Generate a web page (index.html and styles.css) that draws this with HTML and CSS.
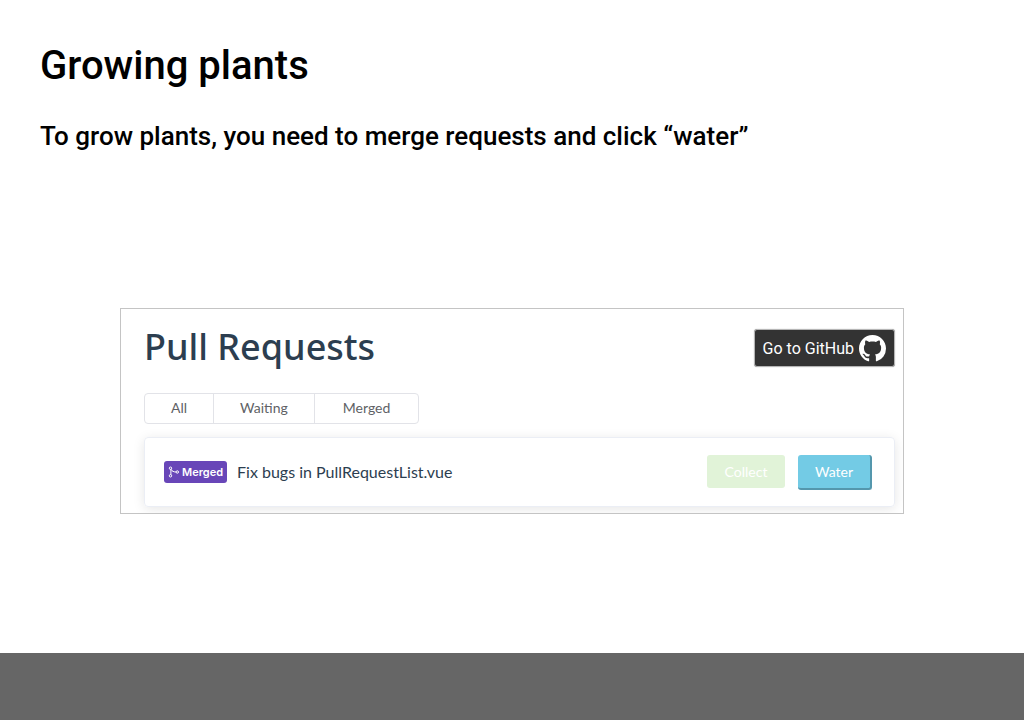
FILE: index.html
```html
<!DOCTYPE html>
<html lang="en">
<head>
<meta charset="utf-8">
<meta name="viewport" content="width=device-width, initial-scale=1">
<title>Growing plants</title>
<link rel="stylesheet" href="styles.css">
</head>
<body>
<main class="slide">
  <h1 class="slide-title">Growing plants</h1>
  <p class="slide-text">To grow plants, you need to merge requests and click “water”</p>
  <section class="panel">
    <header class="panel-header">
      <h2 class="panel-title">Pull Requests</h2>
      <button class="github" type="button">
        <span>Go to GitHub</span>
        <svg class="github-mark" viewBox="0 0 16 16" aria-hidden="true"><path fill="currentColor" d="M8 0C3.58 0 0 3.58 0 8c0 3.54 2.29 6.53 5.47 7.59.4.07.55-.17.55-.38 0-.19-.01-.82-.01-1.49-2.01.37-2.53-.49-2.69-.94-.09-.23-.48-.94-.82-1.13-.28-.15-.68-.52-.01-.53.63-.01 1.08.58 1.23.82.72 1.21 1.87.87 2.33.66.07-.52.28-.87.51-1.07-1.78-.2-3.64-.89-3.64-3.95 0-.87.31-1.59.82-2.15-.08-.2-.36-1.02.08-2.12 0 0 .67-.21 2.2.82.64-.18 1.32-.27 2-.27s1.36.09 2 .27c1.53-1.04 2.2-.82 2.2-.82.44 1.1.16 1.92.08 2.12.51.56.82 1.27.82 2.15 0 3.07-1.87 3.75-3.65 3.95.29.25.54.73.54 1.48 0 1.07-.01 1.93-.01 2.2 0 .21.15.46.55.38A8.01 8.01 0 0 0 16 8c0-4.42-3.58-8-8-8z"/></svg>
      </button>
    </header>
    <div class="tabs">
      <button class="tab" type="button">All</button>
      <button class="tab" type="button">Waiting</button>
      <button class="tab tab-wide" type="button">Merged</button>
    </div>
    <article class="request">
      <span class="badge">
        <svg class="merge-icon" viewBox="0 0 12 14" aria-hidden="true"><g fill="none" stroke="currentColor"><circle cx="2.5" cy="3.2" r="1.2"/><circle cx="2.5" cy="10.8" r="1.2"/><circle cx="9.3" cy="7" r="1.2"/><path d="M2.9 4.2v5.6M3 4.4C4.1 6.2 5.6 7 8.1 7"/></g></svg>
        <span>Merged</span>
      </span>
      <span class="request-name">Fix bugs in PullRequestList.vue</span>
      <div class="actions">
        <button class="action collect" type="button" disabled>Collect</button>
        <button class="action water" type="button">Water</button>
      </div>
    </article>
  </section>
</main>
<footer class="footer"></footer>
</body>
</html>
```
FILE: styles.css
```css
* {
  box-sizing: border-box;
}

body {
  display: flex;
  flex-direction: column;
  min-height: 100vh;
  margin: 0;
  background: #fff;
  color: #000;
  font-family: Roboto, sans-serif;
}

button {
  margin: 0;
  font-family: inherit;
}

.slide {
  flex: 1;
  padding: 40px;
}

.slide-title {
  margin: 0 0 28px;
  font-size: 40px;
  font-weight: 500;
  line-height: 52px;
}

.slide-text {
  margin: 0;
  font-size: 26px;
  font-weight: 500;
  line-height: 32px;
}

.panel {
  margin: 156px 80px 0;
  padding: 20px 8px 6px 23px;
  border: 1px solid #c4c4c4;
  overflow: hidden;
  color: #2c3e50;
  font-family: Lato, sans-serif;
}

.panel-header {
  display: flex;
  align-items: center;
  justify-content: space-between;
  margin-bottom: 26px;
}

.panel-title {
  margin: 0;
  padding-bottom: 2px;
  font-family: "Noto Sans", sans-serif;
  font-size: 36px;
  font-weight: 500;
  line-height: 36px;
}

.github {
  display: flex;
  align-items: center;
  gap: 5px;
  height: 38px;
  padding: 0 8px;
  border: 1px solid #b5b5b5;
  border-radius: 3px;
  box-shadow: 0 0 1px #999;
  background: #333;
  color: #fff;
  font-family: Roboto, sans-serif;
  font-size: 16px;
}

.github-mark {
  width: 27px;
  height: 27px;
}

.tabs {
  display: inline-flex;
  height: 31px;
  margin-bottom: 13px;
  border: 1px solid #e2e3e8;
  border-radius: 4px;
}

.tab {
  padding: 0 26px 2px;
  border: 0;
  background: none;
  color: #606266;
  font-size: 14px;
}

.tab + .tab {
  border-left: 1px solid #e2e3e8;
}

.tab-wide {
  padding: 0 28px 2px;
}

.request {
  display: flex;
  align-items: center;
  height: 70px;
  padding: 0 22px 0 19px;
  border: 1px solid #ebeef5;
  border-radius: 4px;
  box-shadow: 0 2px 12px rgba(0, 0, 0, 0.1);
}

.badge {
  display: flex;
  align-items: center;
  gap: 2px;
  height: 22px;
  margin-right: 10px;
  padding: 0 4px;
  border-radius: 3px;
  background: #6846b8;
  color: #fff;
  font-family: Inter, sans-serif;
  font-size: 11px;
  font-weight: 600;
}

.merge-icon {
  width: 12px;
  height: 14px;
}

.request-name {
  margin-right: auto;
  padding-bottom: 2px;
  font-size: 16px;
}

.actions {
  display: flex;
  align-items: flex-start;
  gap: 13px;
}

.action {
  border: 0;
  border-radius: 3px;
  color: #fff;
  font-size: 14px;
}

.collect {
  width: 78px;
  height: 33px;
  background: #e1f3d8;
}

.water {
  width: 74px;
  height: 35px;
  border-right: 2px solid #5497ad;
  border-bottom: 2px solid #5497ad;
  background: #73cbe5;
}

.footer {
  height: 67px;
  background: #666;
}
```
